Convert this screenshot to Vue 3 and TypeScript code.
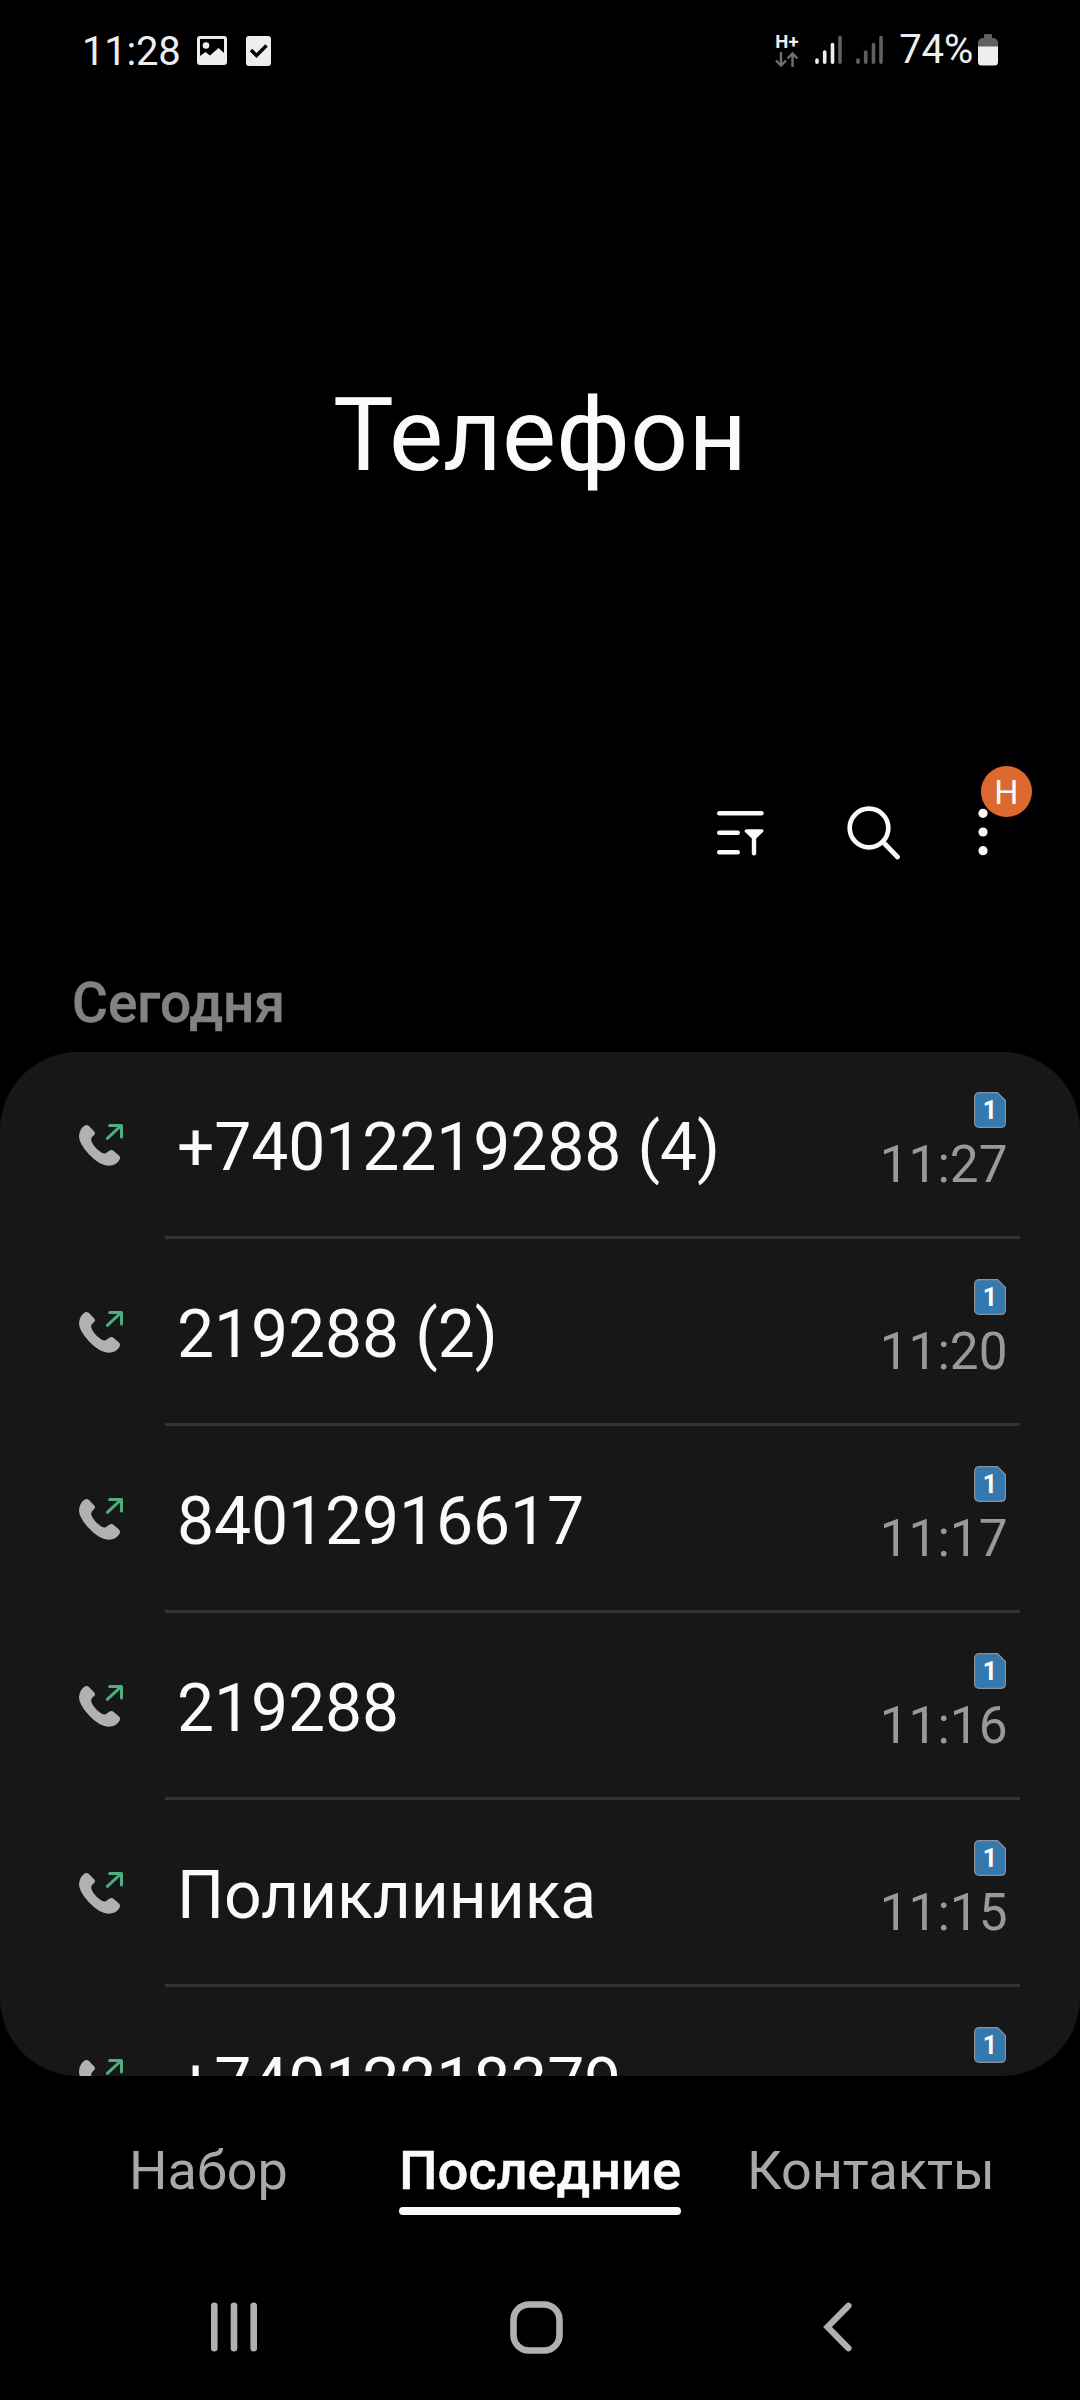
<script setup lang="ts">
interface Call {
  name: string
  time: string
}

const calls: Call[] = [
  { name: '+74012219288 (4)', time: '11:27' },
  { name: '219288 (2)', time: '11:20' },
  { name: '84012916617', time: '11:17' },
  { name: '219288', time: '11:16' },
  { name: 'Поликлиника', time: '11:15' },
  { name: '+74012218379', time: '' },
]

const tabs: { label: string; active: boolean }[] = [
  { label: 'Набор', active: false },
  { label: 'Последние', active: true },
  { label: 'Контакты', active: false },
]
</script>

<template>
  <div class="phone">
    <header class="status">
      <div class="status-left">
        <span class="clock">11:28</span>
        <svg class="picture" width="30" height="30" viewBox="0 0 30 30">
          <path fill="#eee" fill-rule="evenodd" d="M3 0H27Q30 0 30 3V26Q30 29 27 29H3Q0 29 0 26V3Q0 0 3 0ZM3 3V20L8.500 16L13 19.500L21.500 12L27 17V3Z" />
          <circle cx="9" cy="9.500" r="3.300" fill="#eee" />
        </svg>
        <svg class="check" width="25" height="30" viewBox="0 0 25 30">
          <rect width="25" height="30" rx="3" fill="#eee" />
          <path d="M5 14L10.500 19.500L20.500 9.500" fill="none" stroke="#000" stroke-width="3.400" />
        </svg>
      </div>
      <div class="status-right">
        <div class="net">
          <span class="net-type">H+</span>
          <svg width="24" height="15" viewBox="0 0 24 15" fill="none" stroke="#707070" stroke-width="2.400">
            <path d="M6 0V13M1 8.500L6 13.500L11 8.500M17.500 15V2M12.500 6.500L17.500 1.500L22.500 6.500" />
          </svg>
        </div>
        <svg class="signal" width="28" height="30" viewBox="0 0 28 30" stroke-width="3.600" stroke-linecap="round">
          <path stroke="#eee" d="M2 25V27.200M9.700 17V27.200M17.500 9.500V27.200" />
          <path stroke="#606060" d="M25 2.500V27.200" />
        </svg>
        <svg class="signal second" width="28" height="30" viewBox="0 0 28 30" stroke-width="3.600" stroke-linecap="round">
          <path stroke="#606060" d="M2 25V27.200M9.700 17V27.200M17.500 9.500V27.200M25 2.500V27.200" />
        </svg>
        <span class="percent">74%</span>
        <svg class="battery" width="20" height="32" viewBox="0 0 20 32">
          <path fill="#606060" d="M6 1Q6 0 7 0H13Q14 0 14 1V4H16Q20 5 20 9V13H0V9Q0 5 4 4H6Z" />
          <path fill="#eee" d="M0 12.500H20V28Q20 31.500 16.500 31.500H3.500Q0 31.500 0 28Z" />
        </svg>
      </div>
    </header>

    <h1 class="title">Телефон</h1>

    <div class="toolbar">
      <svg class="filter" width="48" height="48" viewBox="0 0 48 48">
        <path d="M3.300 3.300H45.400M3.300 22.700H21.700M3.300 42.300H21.700" stroke="#fafafa" stroke-width="4.600" stroke-linecap="round" />
        <path d="M30.500 19.200H46Q48.500 20 47 22L40.200 28.500V44Q38 47 35.800 44V28.500L29 22Q27.500 20 30.500 19.200Z" fill="#fafafa" />
      </svg>
      <svg class="search" width="54" height="54" viewBox="0 0 54 54" fill="none" stroke="#fafafa" stroke-width="4.700" stroke-linecap="round">
        <circle cx="22" cy="22" r="19.300" />
        <path d="M36 36L50.500 51" />
      </svg>
      <div class="more">
        <svg width="10" height="48" viewBox="0 0 10 48" fill="#fafafa">
          <circle cx="5" cy="5.300" r="4.600" />
          <circle cx="5" cy="24" r="4.600" />
          <circle cx="5" cy="42.700" r="4.600" />
        </svg>
        <span class="notice">Н</span>
      </div>
    </div>

    <h2 class="day">Сегодня</h2>

    <main class="calls">
      <div v-for="call in calls" :key="call.name" class="call">
        <svg class="outgoing" width="48" height="48" viewBox="0 0 144 144">
          <path fill="#b0b1b3" d="M22 14Q29 9 36 15L51 31Q57 37 51 43Q40 51 43 59Q48 75 68 91Q80 101 87 96L97 89Q104 84 111 91L125 103Q132 109 127 117Q118 134 95 134Q66 133 35 99Q6 68 6 46Q7 25 22 14Z" />
          <path fill="none" stroke="#4fae7e" stroke-width="9" stroke-linecap="round" stroke-linejoin="round" d="M91 52L131 15M98 13.500H133.500V48" />
        </svg>
        <div class="body">
          <span class="name">{{ call.name }}</span>
          <div class="meta">
            <span class="sim">
              <svg class="card" width="32" height="36" viewBox="0 0 32 36">
                <path fill="#3478ae" stroke="#8794a0" stroke-width="1.200" d="M5.500 0.600H23.500L31.400 8.500V30.500Q31.400 35.400 26.500 35.400H5.500Q0.600 35.400 0.600 30.500V5.500Q0.600 0.600 5.500 0.600Z" />
              </svg>
              <span class="slot">1</span>
            </span>
            <span v-if="call.time" class="time">{{ call.time }}</span>
          </div>
        </div>
      </div>
    </main>

    <nav class="tabs">
      <span v-for="tab in tabs" :key="tab.label" class="tab" :class="{ active: tab.active }">{{ tab.label }}</span>
    </nav>

    <footer class="keys">
      <svg class="recents" width="48" height="50" viewBox="0 0 48 50" stroke="#b0b0b0" stroke-width="6.600" stroke-linecap="round">
        <path d="M4.300 3.800V46.200M24 3.800V46.200M43.700 3.800V46.200" />
      </svg>
      <svg class="home" width="53" height="53" viewBox="0 0 53 53">
        <rect x="3.500" y="3.500" width="46" height="46" rx="15.500" fill="none" stroke="#b0b0b0" stroke-width="6.600" />
      </svg>
      <svg class="back" width="30" height="50" viewBox="0 0 30 50">
        <path d="M25.500 3.800L4.500 25L25.500 46.200" fill="none" stroke="#b0b0b0" stroke-width="6.200" stroke-linecap="round" />
      </svg>
    </footer>
  </div>
</template>

<style>
body {
  background: #000;
}
</style>

<style scoped>
.phone {
  width: 1080px;
  height: 2400px;
  overflow: hidden;
  display: flex;
  flex-direction: column;
  background: #000;
  color: #fafafa;
  font-family: Roboto, sans-serif;
}
svg {
  display: block;
  flex: none;
}
.status {
  box-sizing: border-box;
  height: 102px;
  display: flex;
  justify-content: space-between;
  align-items: flex-start;
  padding: 32px 82px 0 82px;
  color: #eee;
  font-size: 40px;
  line-height: 40px;
}
.status-left,
.status-right {
  display: flex;
  align-items: flex-start;
}
.clock {
  letter-spacing: -0.2px;
}
.picture {
  margin: 4px 0 0 16px;
}
.check {
  margin: 4px 0 0 19px;
}
.net {
  display: flex;
  flex-direction: column;
  margin: 2px 16px 0 0;
  width: 24px;
}
.net-type {
  font-size: 18.500px;
  line-height: 16px;
  font-weight: 700;
  margin-bottom: 2px;
}
.signal {
  margin: 3px 13px 0 0;
}
.signal.second {
  margin-right: 15px;
}
.percent {
  margin-top: -2px;
  letter-spacing: -0.2px;
}
.battery {
  margin: 2px 0 0 5px;
}
.title {
  margin: 0;
  height: 666px;
  line-height: 666px;
  font-size: 102px;
  font-weight: 400;
  text-align: center;
}
.toolbar {
  box-sizing: border-box;
  height: 128px;
  display: flex;
  justify-content: flex-end;
  align-items: flex-start;
  padding: 38px 92px 0 0;
}
.filter {
  margin: 4px 83px 0 0;
}
.search {
  margin-right: 77px;
}
.more {
  position: relative;
  margin-top: 2px;
}
.notice {
  position: absolute;
  left: 3px;
  top: -42px;
  width: 51px;
  height: 51px;
  border-radius: 50%;
  background: #dd6830;
  font-size: 34px;
  line-height: 52px;
  text-align: center;
}
.day {
  box-sizing: border-box;
  height: 156px;
  margin: 0;
  padding: 80px 0 0 72px;
  font-size: 55px;
  line-height: 54px;
  font-weight: 500;
  -webkit-text-stroke: 0.4px #828282;
  color: #828282;
}
.calls {
  height: 1024px;
  overflow: hidden;
  border-radius: 78px;
  background: #171717;
}
.call {
  height: 187px;
  display: flex;
}
.outgoing {
  margin: 69px 40px 0 77px;
}
.body {
  flex: 1;
  box-sizing: border-box;
  display: flex;
  justify-content: space-between;
  margin-right: 60px;
  padding: 0 13px 0 12px;
  border-bottom: 3px solid #333;
}
.name {
  font-size: 66px;
  line-height: 191px;
  letter-spacing: -0.1px;
  white-space: nowrap;
}
.meta {
  display: flex;
  flex-direction: column;
  align-items: flex-end;
  padding-top: 40px;
}
.sim {
  position: relative;
  width: 32px;
  height: 36px;
  margin-right: 1px;
}
.slot {
  position: absolute;
  inset: 0;
  color: #fff;
  font-size: 25px;
  line-height: 37px;
  font-weight: 700;
  text-align: center;
}
.time {
  margin: 7px -0.5px 0 0;
  font-size: 51.300px;
  line-height: 60px;
  color: #999;
}
.tabs {
  height: 178px;
  box-sizing: border-box;
  padding: 63px 0 0 129px;
  display: flex;
  align-items: flex-start;
  color: #a8a8a8;
  font-size: 54px;
  line-height: 63px;
}
.tab.active {
  position: relative;
  margin: 0 66px 0 111px;
  color: #fafafa;
  font-size: 54.500px;
  font-weight: 500;
  letter-spacing: -0.15px;
  -webkit-text-stroke: 0.4px #fafafa;
}
.tab.active::after {
  content: '';
  position: absolute;
  left: 0;
  right: 0;
  top: 68px;
  height: 8px;
  border-radius: 4px;
  background: #fafafa;
}
.keys {
  height: 146px;
  display: flex;
  align-items: center;
  padding-left: 210px;
}
.home {
  margin-left: 252px;
}
.back {
  margin-left: 260px;
}
</style>
